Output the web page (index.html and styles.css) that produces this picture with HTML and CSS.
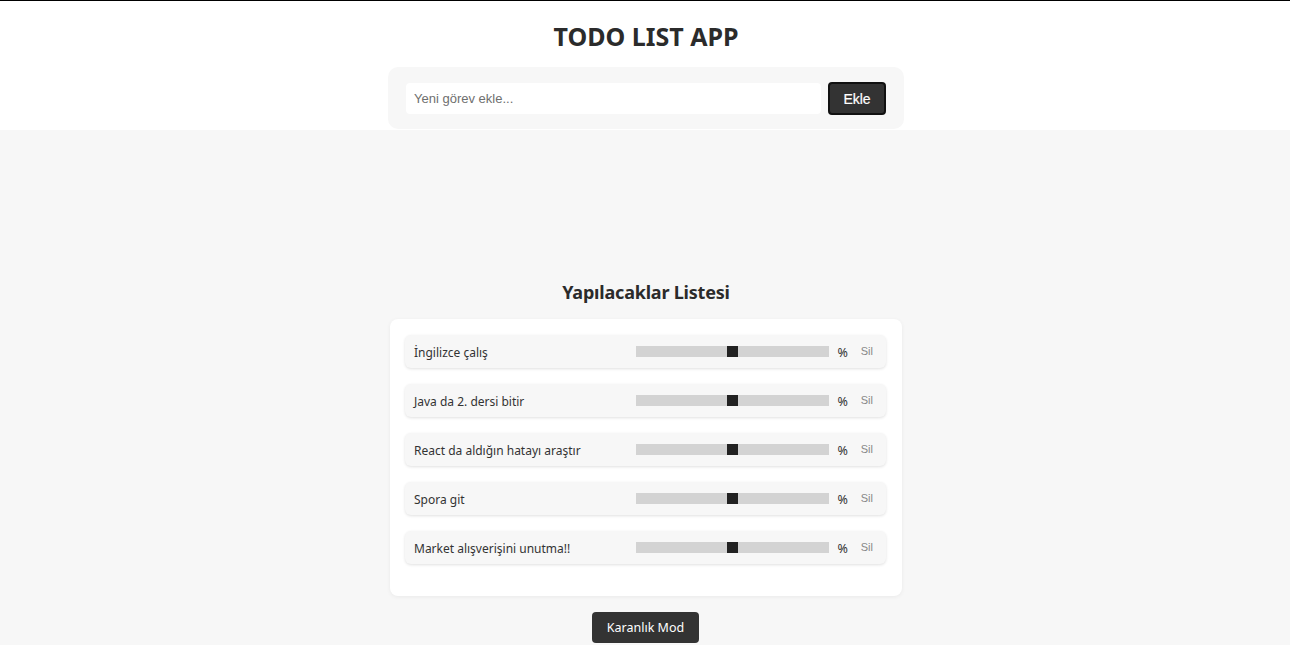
FILE: index.html
```html
<!DOCTYPE html>
<html lang="tr">
<head>
<meta charset="utf-8">
<title>Todo List App</title>
<link rel="stylesheet" href="styles.css">
</head>
<body>
<header class="top">
  <h1 class="app-title">TODO LIST APP</h1>
  <form class="add-card">
    <input class="add-input" type="text" placeholder="Yeni görev ekle...">
    <button class="add-btn" type="button">Ekle</button>
  </form>
</header>
<main class="content">
  <h2 class="list-title">Yapılacaklar Listesi</h2>
  <ul class="list-card">
    <li class="todo">
      <span class="todo-text">İngilizce çalış</span>
      <input class="progress" type="range" min="0" max="100" value="50">
      <span class="pct">%</span>
      <button class="del" type="button">Sil</button>
    </li>
    <li class="todo">
      <span class="todo-text">Java da 2. dersi bitir</span>
      <input class="progress" type="range" min="0" max="100" value="50">
      <span class="pct">%</span>
      <button class="del" type="button">Sil</button>
    </li>
    <li class="todo">
      <span class="todo-text">React da aldığın hatayı araştır</span>
      <input class="progress" type="range" min="0" max="100" value="50">
      <span class="pct">%</span>
      <button class="del" type="button">Sil</button>
    </li>
    <li class="todo">
      <span class="todo-text">Spora git</span>
      <input class="progress" type="range" min="0" max="100" value="50">
      <span class="pct">%</span>
      <button class="del" type="button">Sil</button>
    </li>
    <li class="todo">
      <span class="todo-text">Market alışverişini unutma!!</span>
      <input class="progress" type="range" min="0" max="100" value="50">
      <span class="pct">%</span>
      <button class="del" type="button">Sil</button>
    </li>
  </ul>
  <button class="mode-btn" type="button">Karanlık Mod</button>
</main>
</body>
</html>
```
FILE: styles.css
```css
* { box-sizing: border-box; }

html, body {
  margin: 0;
  padding: 0;
}

body {
  background: #f7f7f7;
  border-top: 1px solid #000;
  padding-left: 2px;
  font-family: "Noto Sans", "Open Sans", sans-serif;
  color: #2b2b2b;
  min-height: 645px;
}

.top {
  background: #fff;
  margin-left: -2px;
  padding-left: 2px;
  height: 129px;
  padding-top: 20px;
  display: flex;
  flex-direction: column;
  align-items: center;
}

.app-title {
  margin: 0;
  font-size: 25px;
  line-height: 30px;
  font-weight: 700;
  color: #2b2b2b;
}

.add-card {
  margin: 16px 0 0;
  width: 516px;
  background: #f7f7f7;
  border-radius: 10px;
  padding: 15px 18px 14px 18px;
  display: flex;
  align-items: center;
  gap: 7px;
}

.add-input {
  flex: 1;
  height: 31px;
  border: none;
  border-radius: 4px;
  background: #fff;
  padding: 0 8px;
  font-family: "Liberation Sans", Arial, sans-serif;
  font-size: 13px;
  color: #333;
  outline: none;
}

.add-input::placeholder { color: #6f6f6f; }

.add-btn {
  width: 58px;
  height: 33px;
  background: #333;
  border: 2px solid #111;
  border-radius: 4px;
  color: #fff;
  font-family: "Liberation Sans", Arial, sans-serif;
  font-size: 14px;
  font-weight: 400;
  -webkit-text-stroke: 0.2px #fff;
}

.content {
  padding-top: 150px;
  display: flex;
  flex-direction: column;
  align-items: center;
}

.list-title {
  margin: 0;
  font-size: 18px;
  line-height: 24px;
  letter-spacing: -0.2px;
  font-weight: 700;
  color: #2b2b2b;
}

.list-card {
  list-style: none;
  margin: 15px 0 0;
  width: 512px;
  background: #fff;
  border-radius: 8px;
  box-shadow: 0 1px 4px rgba(0, 0, 0, 0.06);
  padding: 16px 16px 16px 15px;
  display: flex;
  flex-direction: column;
  gap: 16px;
}

.list-card::after {
  content: "";
  height: 0;
}

.todo {
  height: 33px;
  background: #f7f7f7;
  border-radius: 6px;
  box-shadow: 0 1px 3px rgba(0, 0, 0, 0.12);
  padding: 0 8px 0 9px;
  display: flex;
  align-items: center;
  gap: 8px;
}

.todo-text {
  flex: 1;
  font-size: 12px;
  color: #333;
  padding-top: 2px;
}

.progress {
  -webkit-appearance: none;
  appearance: none;
  width: 193px;
  height: 11px;
  margin: 0;
  background: #d3d3d3;
  outline: none;
  border: none;
}

.progress::-webkit-slider-thumb {
  -webkit-appearance: none;
  appearance: none;
  width: 11px;
  height: 11px;
  background: #222;
  border: none;
  border-radius: 0;
  cursor: pointer;
}

.pct {
  font-size: 12.5px;
  color: #333;
  padding-top: 1px;
}

.del {
  background: transparent;
  border: none;
  padding: 0 5px 2px;
  font-family: "Liberation Sans", Arial, sans-serif;
  font-size: 11px;
  color: #888;
}

.mode-btn {
  margin-top: 16px;
  margin-right: 1px;
  width: 107px;
  height: 31px;
  background: #333;
  border: none;
  border-radius: 4px;
  color: #fff;
  font-family: "Noto Sans", "Open Sans", sans-serif;
  font-size: 12.5px;
}
```
